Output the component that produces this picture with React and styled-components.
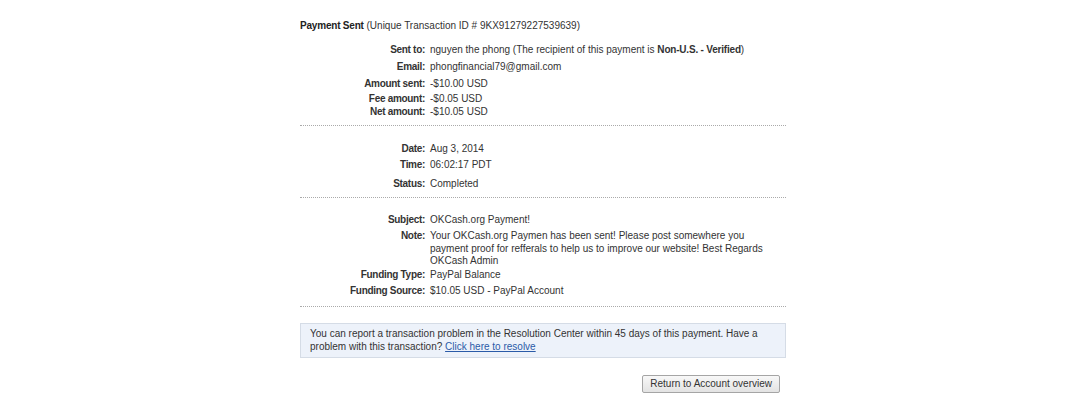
import React from 'react';
import styled, { createGlobalStyle } from 'styled-components';

const GlobalStyle = createGlobalStyle`
  body {
    margin: 0;
    background: #fff;
    font-family: Arial, "Liberation Sans", sans-serif;
    font-size: 10px;
    color: #333;
  }
`;

const Page = styled.div`
  width: 486px;
  margin-left: 300px;
  padding-top: 19px;
`;

const Title = styled.div`
  line-height: 13px;
  b {
    font-weight: bold;
    color: #222;
    letter-spacing: -0.2px;
  }
`;

const Section = styled.div`
  padding-top: ${p => p.top}px;
  padding-bottom: ${p => p.bottom}px;
  border-bottom: 1px dotted #aaa;
`;

const Row = styled.div`
  display: grid;
  grid-template-columns: 125px 1fr;
  column-gap: 5px;
  line-height: ${p => p.lh || 13}px;
  margin-top: ${p => p.gap || 0}px;
`;

const Label = styled.div`
  text-align: right;
  font-weight: bold;
  color: #333;
  white-space: nowrap;
  letter-spacing: -0.3px;
`;

const Value = styled.div`
  max-width: ${p => p.wrap || 356}px;
  b {
    font-weight: bold;
    letter-spacing: -0.2px;
  }
`;

const Notice = styled.div`
  margin-top: 16px;
  background: #edf2fa;
  border: 1px solid #d5dce6;
  padding: 3px 20px 4px 9px;
  line-height: 13px;
  color: #333;
  a {
    color: #2b5ba8;
    text-decoration: underline;
  }
`;

const Actions = styled.div`
  display: flex;
  justify-content: flex-end;
  padding-right: 6px;
  margin-top: 17px;
`;

const Button = styled.button`
  font-family: Arial, "Liberation Sans", sans-serif;
  font-size: 10px;
  color: #333;
  height: 18px;
  padding: 0 7px;
  border: 1px solid #a5a5a5;
  border-radius: 2px;
  background: linear-gradient(#f8f8f8, #e3e3e3);
  line-height: 16px;
`;

const details = [
  { label: 'Sent to:', value: <>nguyen the phong (The recipient of this payment is <b>Non-U.S. - Verified</b>)</>, gap: 0 },
  { label: 'Email:', value: 'phongfinancial79@gmail.com', gap: 4 },
  { label: 'Amount sent:', value: '-$10.00 USD', gap: 4 },
  { label: 'Fee amount:', value: '-$0.05 USD', gap: 2 },
  { label: 'Net amount:', value: '-$10.05 USD', gap: 0 },
];

const App = () => (
  <>
    <GlobalStyle />
    <Page>
      <Title>
        <b>Payment Sent</b> (Unique Transaction ID # 9KX91279227539639)
      </Title>

      <Section top={11} bottom={7}>
        {details.map(d => (
          <Row key={d.label} gap={d.gap}>
            <Label>{d.label}</Label>
            <Value>{d.value}</Value>
          </Row>
        ))}
      </Section>

      <Section top={16} bottom={7}>
        <Row>
          <Label>Date:</Label>
          <Value>Aug 3, 2014</Value>
        </Row>
        <Row gap={3}>
          <Label>Time:</Label>
          <Value>06:02:17 PDT</Value>
        </Row>
        <Row gap={6}>
          <Label>Status:</Label>
          <Value>Completed</Value>
        </Row>
      </Section>

      <Section top={15} bottom={9}>
        <Row>
          <Label>Subject:</Label>
          <Value>OKCash.org Payment!</Value>
        </Row>
        <Row gap={4} lh={12.5}>
          <Label>Note:</Label>
          <Value wrap={335}>
            Your OKCash.org Paymen has been sent! Please post somewhere you payment proof for refferals to help us
            to improve our website! Best Regards OKCash Admin
          </Value>
        </Row>
        <Row>
          <Label>Funding Type:</Label>
          <Value>PayPal Balance</Value>
        </Row>
        <Row gap={3}>
          <Label>Funding Source:</Label>
          <Value>$10.05 USD - PayPal Account</Value>
        </Row>
      </Section>

      <Notice>
        You can report a transaction problem in the Resolution Center within 45 days of this payment. Have a
        problem with this transaction? <a href="#resolve">Click here to resolve</a>
      </Notice>

      <Actions>
        <Button type="button">Return to Account overview</Button>
      </Actions>
    </Page>
  </>
);

export default App;
